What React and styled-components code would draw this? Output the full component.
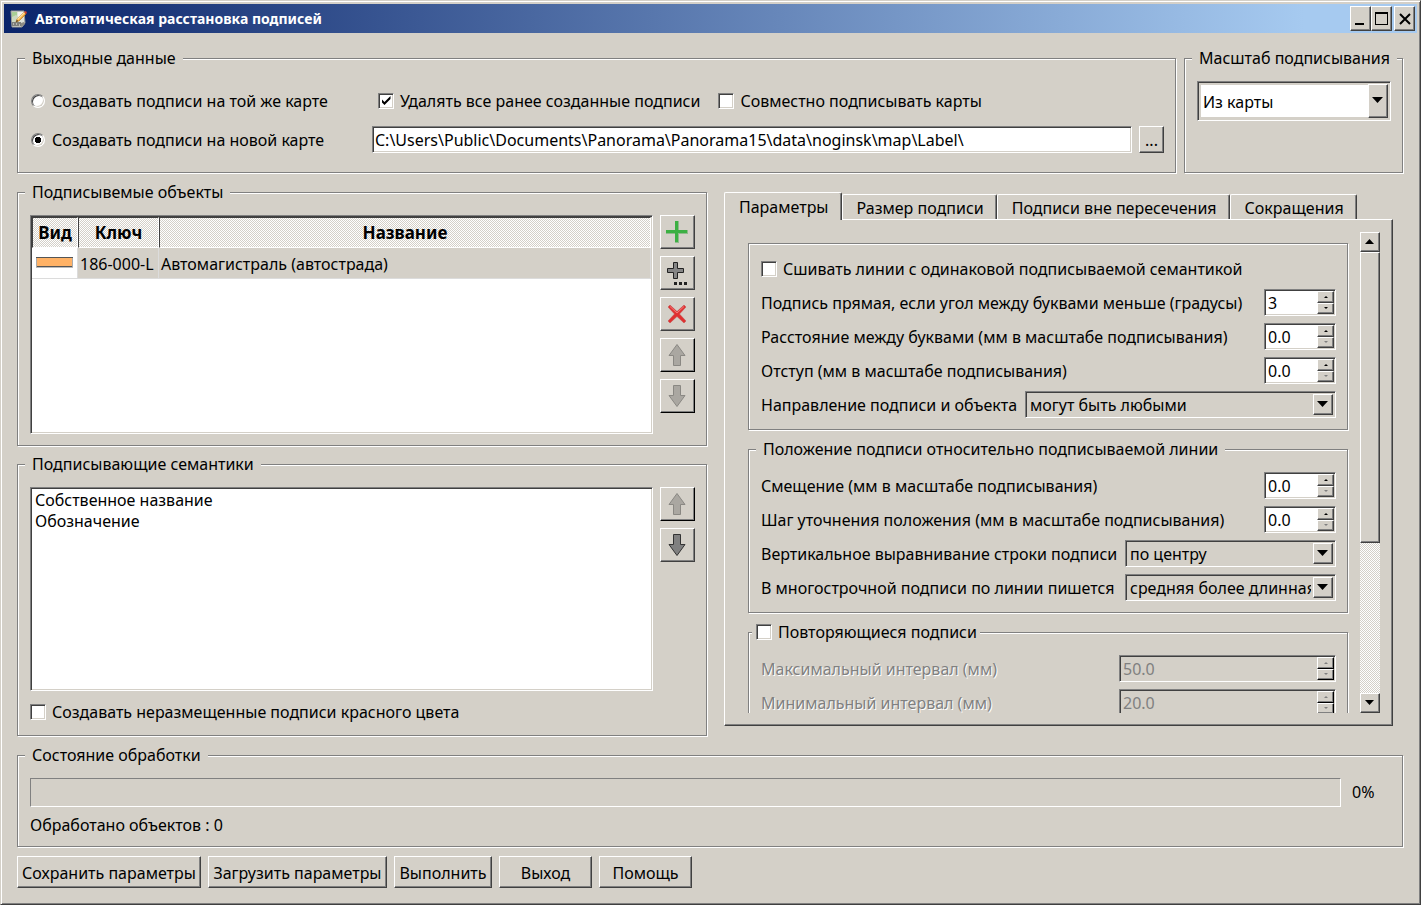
import React, { useState } from "react";
import styled, { createGlobalStyle, css } from "styled-components";

const GlobalStyle = createGlobalStyle`
  * {
    box-sizing: border-box;
  }
  body {
    margin: 0;
    background: #d4d0c8;
  }
  body,
  button,
  input,
  select {
    font-family: "Noto Sans", "Open Sans", sans-serif;
    font-size: 16px;
    line-height: 20px;
    color: #000;
  }
`;

const raised = css`
  background: #d4d0c8;
  border: 1px solid;
  border-color: #fff #404040 #404040 #fff;
  box-shadow: inset -1px -1px 0 #808080;
`;

const sunken = css`
  border: 1px solid;
  border-color: #808080 #fff #fff #808080;
  box-shadow: inset 1px 1px 0 #404040, inset -1px -1px 0 #d4d0c8;
`;

const dither = css`
  background: repeating-conic-gradient(#fff 0 25%, #d4d0c8 0 50%) 0 0 / 2px 2px;
`;

const Window = styled.div`
  min-height: 100vh;
  display: flex;
  flex-direction: column;
  padding: 2px;
  background: #d4d0c8;
  border: 1px solid;
  border-color: #d4d0c8 #404040 #404040 #d4d0c8;
  box-shadow: inset 1px 1px 0 #fff, inset -1px -1px 0 #808080;
`;

const TitleBar = styled.header`
  display: flex;
  align-items: center;
  height: 29px;
  margin: 1px 1px 0;
  padding: 0 2px 0 6px;
  background: linear-gradient(to right, #0a246a, #a6caf0 92%);
`;

const Title = styled.h1`
  flex: 1;
  margin: 0 0 0 7px;
  font-size: 14px;
  line-height: 20px;
  font-weight: bold;
  color: #fff;
`;

const CaptionButton = styled.button`
  ${raised}
  display: flex;
  align-items: center;
  justify-content: center;
  width: 21px;
  height: 25px;
  padding: 0;
  margin-left: ${(p) => (p.$apart ? "2px" : "0")};
`;

const Body = styled.main`
  flex: 1;
  display: flex;
  flex-direction: column;
  gap: 9px;
  padding: 15px 15px 14px 14px;
`;

const Row = styled.div`
  display: flex;
  gap: ${(p) => p.$gap || "7px"};
`;

const Group = styled.fieldset`
  display: flex;
  flex-direction: column;
  min-width: 0;
  margin: 0;
  padding: ${(p) => p.$pad || "13px 11px 11px 12px"};
  border: 1px solid #808080;
  box-shadow: 1px 1px 0 #fff, inset 1px 1px 0 #fff;
  flex: ${(p) => p.$flex || "none"};
`;

const Legend = styled.legend`
  display: flex;
  align-items: center;
  height: 20px;
  margin-left: ${(p) => (p.$check ? "-9px" : "-5px")};
  padding: ${(p) => (p.$check ? "0 3px 0 4px" : "0 7px")};
  background: #d4d0c8;
  white-space: nowrap;
`;

const OutputRow = styled.div`
  display: flex;
  align-items: center;
  height: 27px;
  & + & {
    margin-top: 12px;
  }
`;

const RadioLabel = styled.label`
  display: flex;
  align-items: center;
  flex: 0 0 342px;
  gap: 7px;
`;

const CheckLabel = styled.label`
  display: flex;
  align-items: center;
  gap: 6px;
  margin-left: ${(p) => p.$left || "0"};
  white-space: nowrap;
`;

const Radio = styled.input.attrs({ type: "radio" })`
  ${sunken}
  appearance: none;
  width: 14px;
  height: 14px;
  margin: 0 0 0 1px;
  border-radius: 50%;
  background: #fff;
  &:checked {
    background: radial-gradient(circle, #000 0 3px, #fff 3px);
  }
`;

const CheckBox = styled.input.attrs({ type: "checkbox" })`
  ${sunken}
  appearance: none;
  display: grid;
  place-items: center;
  width: 16px;
  height: 16px;
  margin: 0;
  background: #fff;
  &:checked::before {
    content: "";
    width: 9px;
    height: 9px;
    background: #000;
    clip-path: polygon(0 33%, 33% 66%, 100% 0, 100% 33%, 33% 100%, 0 66%);
  }
`;

const PathInput = styled.input`
  ${sunken}
  flex: 1;
  min-width: 0;
  height: 27px;
  margin-right: 7px;
  padding: 0 2px;
  background: #fff;
`;

const BrowseButton = styled.button`
  ${raised}
  width: 25px;
  height: 27px;
  padding: 0;
`;

const Columns = styled.div`
  flex: 1;
  display: flex;
  gap: 17px;
  padding-right: 10px;
`;

const LeftColumn = styled.div`
  flex: 1 1 690px;
  min-width: 0;
  display: flex;
  flex-direction: column;
  gap: 8px;
`;

const RightColumn = styled.div`
  flex: 1 1 669px;
  min-width: 0;
  display: flex;
  flex-direction: column;
  padding-top: 10px;
`;

const Fill = styled.div`
  flex: 1;
  display: flex;
  gap: 7px;
`;

const Frame = styled.div`
  ${sunken}
  flex: 1;
  min-width: 0;
  padding: ${(p) => p.$pad || "1px"};
  background: #fff;
`;

const ObjectsTable = styled.table`
  width: 100%;
  table-layout: fixed;
  border-collapse: separate;
  border-spacing: 0;
`;

const HeadCell = styled.th`
  ${dither}
  width: ${(p) => p.$w || "auto"};
  height: 31px;
  padding: 1px 0 0;
  border: 1px solid;
  border-color: #404040 #fff #fff #404040;
  font-size: 17px;
  font-weight: bold;
`;

const Cell = styled.td`
  height: 31px;
  padding: 1px 2px 0;
  border-right: 1px solid #dcdcdc;
  border-bottom: 1px solid #dcdcdc;
  background: ${(p) => (p.$plain ? "#fff" : "#d4d0c8")};
  white-space: nowrap;
`;

const ToolColumn = styled.div`
  display: flex;
  flex-direction: column;
  gap: 7px;
`;

const ToolButton = styled.button`
  ${raised}
  display: flex;
  align-items: center;
  justify-content: center;
  width: 35px;
  height: 34px;
  padding: 0 2px 0 0;
  &:disabled {
    border-color: #fff #000 #000 #fff;
  }
`;

const ItemList = styled.ul`
  margin: 0;
  padding: 0;
  list-style: none;
  line-height: 21px;
`;

const TabList = styled.div`
  display: flex;
  align-items: flex-end;
  height: 27px;
`;

const Tab = styled.button`
  height: ${(p) => (p.$active ? "28px" : "25px")};
  margin-bottom: ${(p) => (p.$active ? "-1px" : "0")};
  padding: ${(p) => (p.$active ? "0 12px 0 14px" : "2px 12px 0 14px")};
  background: #d4d0c8;
  border: 1px solid;
  border-color: #fff #404040 transparent #fff;
  border-bottom: 0;
  border-radius: 2px 2px 0 0;
  box-shadow: inset -1px 0 0 #808080;
  white-space: nowrap;
  z-index: ${(p) => (p.$active ? 1 : 0)};
`;

const TabPanel = styled.div`
  ${raised}
  flex: 1;
  display: flex;
  padding: 12px;
  margin-bottom: 10px;
`;

const ScrollView = styled.div`
  flex: 1;
  min-width: 0;
  display: flex;
  flex-direction: column;
  contain: size;
  overflow: hidden;
`;

const Settings = styled.div`
  flex: none;
  display: flex;
  flex-direction: column;
  gap: 9px;
  padding: 11px 12px 11px 11px;
`;

const ScrollBar = styled.div`
  ${dither}
  display: flex;
  flex-direction: column;
  width: 20px;
`;

const ScrollTrack = styled.div`
  flex: 1;
`;

const ScrollThumb = styled.div`
  ${raised}
  height: 66%;
`;

const ScrollButton = styled.button`
  ${raised}
  display: flex;
  align-items: center;
  justify-content: center;
  width: 20px;
  height: 20px;
  padding: 0 2px 2px 0;
`;

const Rows = styled.div`
  display: flex;
  flex-direction: column;
  gap: 7px;
`;

const SettingRow = styled.div`
  display: flex;
  align-items: center;
  justify-content: space-between;
  height: 27px;
`;

const SettingLabel = styled.label`
  white-space: nowrap;
  color: ${(p) => (p.$off ? "#808080" : "#000")};
  text-shadow: ${(p) => (p.$off ? "1px 1px 0 #fff" : "none")};
`;

const SpinFrame = styled.div`
  ${sunken}
  display: flex;
  flex: none;
  width: ${(p) => p.$w};
  height: 27px;
  padding: 1px;
  background: ${(p) => (p.$off ? "#d4d0c8" : "#fff")};
`;

const SpinInput = styled.input`
  flex: 1;
  min-width: 0;
  padding: 0 2px;
  border: 0;
  background: transparent;
  &:disabled {
    color: #808080;
  }
`;

const SpinButtons = styled.div`
  display: grid;
  grid-template-rows: 1fr 1fr;
  width: 17px;
`;

const SpinButton = styled.button`
  ${raised}
  display: flex;
  align-items: center;
  justify-content: center;
  min-height: 0;
  padding: 0;
  &:disabled {
    border-color: #fff #000 #000 #fff;
  }
`;

const SelectFrame = styled.div`
  ${sunken}
  display: flex;
  position: relative;
  flex: none;
  width: ${(p) => p.$w || "auto"};
  height: ${(p) => (p.$tall ? "40px" : "27px")};
  padding: ${(p) => (p.$tall ? "3px" : "2px")};
`;

const SelectBox = styled.select`
  appearance: none;
  flex: 1;
  min-width: 0;
  padding: ${(p) => (p.$tall ? "2px 22px 0 2px" : "0 22px 0 2px")};
  border: 0;
  border-radius: 0;
  background: ${(p) => (p.$tall ? "#fff" : "#d4d0c8")};
`;

const SelectArrow = styled.span`
  ${raised}
  position: absolute;
  top: 2px;
  right: 2px;
  bottom: 2px;
  width: 20px;
  display: flex;
  align-items: center;
  justify-content: center;
  padding: 0 2px 2px 0;
  pointer-events: none;
`;

const Progress = styled.div`
  flex: 1;
  height: 29px;
  border: 1px solid;
  border-color: #808080 #fff #fff #808080;
`;

const Percent = styled.span`
  width: 39px;
  line-height: 29px;
`;

const Status = styled.div`
  margin-top: ${(p) => p.$top || "8px"};
`;

const ActionButton = styled.button`
  ${raised}
  min-width: ${(p) => p.$w};
  height: 32px;
  padding: 2px 3px 0;
  white-space: nowrap;
`;

const Symbol = styled.svg`
  display: block;
  margin: 0 auto;
`;

const Triangle = ({ w, h, up, color = "#000" }) => (
  <svg width={w} height={h} viewBox="0 0 10 10" preserveAspectRatio="none">
    <path d={up ? "M5 0L10 10H0z" : "M0 0H10L5 10z"} fill={color} />
  </svg>
);

const AppIcon = () => (
  <svg width="18" height="18" viewBox="0 0 18 18">
    <path d="M1 1h13l1 12-3 4H2z" fill="#dfe2da" stroke="#9a9c96" />
    <path d="M2 2h5v5H2z" fill="#a9cf95" />
    <path d="M8 2h6v5H8z" fill="#f3f3ee" />
    <path d="M2 7l4-2 4 3-2 4H2z" fill="#ccd8c0" />
    <path d="M2 12h9v4H2z" fill="#7e807b" />
    <path d="M3 14h1M6 14h1M9 15h1" stroke="#eee" />
    <path d="M11 13l3-1 1 2-4 3z" fill="#8c8a84" />
    <path d="M6 12l1-3 7-7 2 2-7 7z" fill="#f6ac3a" stroke="#a86d1c" strokeWidth="0.6" />
    <path d="M7 9l7-7 1 1-7 7z" fill="#fde0a0" />
    <path d="M14 2l2-1 1 2-1 1z" fill="#d8402f" />
    <path d="M6 12l1-2 1 1z" fill="#222" />
  </svg>
);

const PlusIcon = () => (
  <svg width="22" height="22" viewBox="0 0 22 22">
    <path d="M9 0h4v9h9v4h-9v9H9v-9H0V9h9z" fill="#8fba8b" />
    <path d="M9 0h3v9h9v3h-9v9H9v-9H0V9h9z" fill="#3cb043" />
  </svg>
);

const PlusDotsIcon = () => (
  <svg width="22" height="24" viewBox="0 0 22 24">
    <path
      d="M7.5 1.5h4v6h6v4h-6v6h-4v-6h-6v-4h6z"
      fill="#858585"
      stroke="#222"
    />
    <path d="M8 21h3v3H8zM13 21h3v3h-3zM18 21h3v3h-3z" fill="#222" />
  </svg>
);

const CrossIcon = () => (
  <svg width="20" height="20" viewBox="0 0 20 20">
    <path
      d="M3 1l7 6.500L17 1l2 2-6.500 7L19 17l-2 2-7-6.500L3 19l-2-2 6.500-7L1 3z"
      fill="#e03030"
      stroke="#c05050"
      strokeWidth="0.5"
    />
    <path d="M3 2.500l7 6.500 7-6.500" fill="none" stroke="#f47a78" />
  </svg>
);

const ArrowIcon = ({ down, off }) => (
  <svg width="20" height="24" viewBox="0 0 20 24">
    <path
      d={
        down
          ? "M6.5 1.5h7v10h4.5L10 22.5 2 11.5h4.5z"
          : "M10 1.5l8 11h-4.5v10h-7v-10H2z"
      }
      fill={off ? "#aaa7a1" : "#808080"}
      stroke={off ? "#8a8883" : "#333"}
    />
  </svg>
);

const LineSymbol = () => (
  <Symbol width="37" height="13" viewBox="0 0 37 13">
    <rect x="0" y="0" width="37" height="11" fill="#ffb266" />
    <path d="M0 0.5H37M0 9.5H37" stroke="#555" />
    <path d="M0 10.5H37" stroke="#bbb" />
    <path d="M0.5 1V10M36.5 1V10" stroke="#aaa" />
  </Symbol>
);

const Check = ({ label, left, ...rest }) => (
  <CheckLabel $left={left}>
    <CheckBox {...rest} />
    {label}
  </CheckLabel>
);

const Combo = ({ id, label, value, width, tall }) => (
  <SelectFrame $w={width} $tall={tall}>
    <SelectBox id={id} aria-label={label} defaultValue={value} $tall={tall}>
      <option value={value}>{value}</option>
    </SelectBox>
    <SelectArrow>
      <Triangle w={11} h={6} />
    </SelectArrow>
  </SelectFrame>
);

const Spin = ({ id, label, value, width = "72px", atMin = true, disabled }) => (
  <SettingRow>
    <SettingLabel htmlFor={id} $off={disabled}>
      {label}
    </SettingLabel>
    <SpinFrame $w={width} $off={disabled}>
      <SpinInput id={id} defaultValue={value} disabled={disabled} />
      <SpinButtons>
        <SpinButton aria-label="Больше" disabled={disabled}>
          <Triangle up w={4} h={2} color={disabled ? "#808080" : "#000"} />
        </SpinButton>
        <SpinButton aria-label="Меньше" disabled={disabled}>
          <Triangle w={4} h={2} color={atMin ? "#808080" : "#000"} />
        </SpinButton>
      </SpinButtons>
    </SpinFrame>
  </SettingRow>
);

const Choice = ({ id, label, value, width }) => (
  <SettingRow>
    <SettingLabel htmlFor={id}>{label}</SettingLabel>
    <Combo id={id} value={value} width={width} />
  </SettingRow>
);

const tabs = ["Параметры", "Размер подписи", "Подписи вне пересечения", "Сокращения"];

const actions = [
  { text: "Сохранить параметры", width: "184px" },
  { text: "Загрузить параметры", width: "179px" },
  { text: "Выполнить", width: "98px" },
  { text: "Выход", width: "93px" },
  { text: "Помощь", width: "93px" },
];

const App = () => {
  const [target, setTarget] = useState("new");
  const [tab, setTab] = useState(0);

  return (
    <>
      <GlobalStyle />
      <Window>
        <TitleBar>
          <AppIcon />
          <Title>Автоматическая расстановка подписей</Title>
          <CaptionButton aria-label="Свернуть">
            <svg width="13" height="15" viewBox="0 0 13 15">
              <path d="M1 12h9v2H1z" />
            </svg>
          </CaptionButton>
          <CaptionButton aria-label="Развернуть">
            <svg width="13" height="13" viewBox="0 0 13 13">
              <path d="M0 0h13v13H0zM1 2v10h11V2z" fillRule="evenodd" />
            </svg>
          </CaptionButton>
          <CaptionButton aria-label="Закрыть" $apart>
            <svg width="12" height="12" viewBox="0 0 12 12">
              <path d="M1 1l10 10M11 1L1 11" stroke="#000" strokeWidth="2" />
            </svg>
          </CaptionButton>
        </TitleBar>

        <Body>
          <Row $gap="8px">
            <Group $flex="1" $pad="19px 11px 19px 12px">
              <Legend>Выходные данные</Legend>
              <OutputRow>
                <RadioLabel>
                  <Radio name="target" checked={target === "same"} onChange={() => setTarget("same")} />
                  Создавать подписи на той же карте
                </RadioLabel>
                <Check label="Удалять все ранее созданные подписи" left="6px" defaultChecked />
                <Check label="Совместно подписывать карты" left="18px" />
              </OutputRow>
              <OutputRow>
                <RadioLabel>
                  <Radio name="target" checked={target === "new"} onChange={() => setTarget("new")} />
                  Создавать подписи на новой карте
                </RadioLabel>
                <PathInput
                  aria-label="Путь к новой карте"
                  defaultValue="C:\Users\Public\Documents\Panorama\Panorama15\data\noginsk\map\Label\"
                />
                <BrowseButton>...</BrowseButton>
              </OutputRow>
            </Group>
            <Group $flex="0 0 219px">
              <Legend>Масштаб подписывания</Legend>
              <Combo label="Масштаб подписывания" value="Из карты" tall />
            </Group>
          </Row>

          <Columns>
            <LeftColumn>
              <Group $flex="1 1 264px">
                <Legend>Подписывемые объекты</Legend>
                <Fill>
                  <Frame>
                    <ObjectsTable>
                      <thead>
                        <tr>
                          <HeadCell $w="46px">Вид</HeadCell>
                          <HeadCell $w="81px">Ключ</HeadCell>
                          <HeadCell>Название</HeadCell>
                        </tr>
                      </thead>
                      <tbody>
                        <tr>
                          <Cell $plain>
                            <LineSymbol />
                          </Cell>
                          <Cell>186-000-L</Cell>
                          <Cell>Автомагистраль (автострада)</Cell>
                        </tr>
                      </tbody>
                    </ObjectsTable>
                  </Frame>
                  <ToolColumn>
                    <ToolButton aria-label="Добавить">
                      <PlusIcon />
                    </ToolButton>
                    <ToolButton aria-label="Добавить несколько">
                      <PlusDotsIcon />
                    </ToolButton>
                    <ToolButton aria-label="Удалить">
                      <CrossIcon />
                    </ToolButton>
                    <ToolButton aria-label="Вверх" disabled>
                      <ArrowIcon off />
                    </ToolButton>
                    <ToolButton aria-label="Вниз" disabled>
                      <ArrowIcon down off />
                    </ToolButton>
                  </ToolColumn>
                </Fill>
              </Group>

              <Group $flex="1 1 282px" $pad="13px 11px 13px 12px">
                <Legend>Подписывающие семантики</Legend>
                <Fill>
                  <Frame $pad="2px 4px">
                    <ItemList>
                      <li>Собственное название</li>
                      <li>Обозначение</li>
                    </ItemList>
                  </Frame>
                  <ToolColumn>
                    <ToolButton aria-label="Вверх" disabled>
                      <ArrowIcon off />
                    </ToolButton>
                    <ToolButton aria-label="Вниз">
                      <ArrowIcon down />
                    </ToolButton>
                  </ToolColumn>
                </Fill>
                <Status $top="11px">
                  <Check label="Создавать неразмещенные подписи красного цвета" />
                </Status>
              </Group>
            </LeftColumn>

            <RightColumn>
              <TabList role="tablist">
                {tabs.map((name, i) => (
                  <Tab key={name} role="tab" aria-selected={tab === i} $active={tab === i} onClick={() => setTab(i)}>
                    {name}
                  </Tab>
                ))}
              </TabList>
              <TabPanel role="tabpanel">
                <ScrollView>
                  <Settings>
                    <Group $pad="11px 11px 11px 12px">
                      <Rows>
                        <SettingRow>
                          <Check label="Сшивать линии с одинаковой подписываемой семантикой" />
                        </SettingRow>
                        <Spin
                          id="angle"
                          label="Подпись прямая, если угол между буквами меньше (градусы)"
                          value="3"
                          atMin={false}
                        />
                        <Spin id="spacing" label="Расстояние между буквами (мм в масштабе подписывания)" value="0.0" />
                        <Spin id="indent" label="Отступ (мм в масштабе подписывания)" value="0.0" />
                        <Choice
                          id="direction"
                          label="Направление подписи и объекта"
                          value="могут быть любыми"
                          width="311px"
                        />
                      </Rows>
                    </Group>

                    <Group>
                      <Legend>Положение подписи относительно подписываемой линии</Legend>
                      <Rows>
                        <Spin id="offset" label="Смещение (мм в масштабе подписывания)" value="0.0" />
                        <Spin id="step" label="Шаг уточнения положения (мм в масштабе подписывания)" value="0.0" />
                        <Choice
                          id="valign"
                          label="Вертикальное выравнивание строки подписи"
                          value="по центру"
                          width="211px"
                        />
                        <Choice
                          id="multiline"
                          label="В многострочной подписи по линии пишется"
                          value="средняя более длинная"
                          width="211px"
                        />
                      </Rows>
                    </Group>

                    <Group>
                      <Legend $check>
                        <Check label="Повторяющиеся подписи" />
                      </Legend>
                      <Rows>
                        <Spin id="max" label="Максимальный интервал (мм)" value="50.0" width="217px" disabled />
                        <Spin id="min" label="Минимальный интервал (мм)" value="20.0" width="217px" disabled />
                      </Rows>
                    </Group>
                  </Settings>
                </ScrollView>
                <ScrollBar>
                  <ScrollButton aria-label="Прокрутить вверх">
                    <Triangle up w={9} h={5} />
                  </ScrollButton>
                  <ScrollTrack>
                    <ScrollThumb />
                  </ScrollTrack>
                  <ScrollButton aria-label="Прокрутить вниз">
                    <Triangle w={9} h={5} />
                  </ScrollButton>
                </ScrollBar>
              </TabPanel>
            </RightColumn>
          </Columns>

          <Group>
            <Legend>Состояние обработки</Legend>
            <Row $gap="11px">
              <Progress role="progressbar" aria-label="Состояние обработки" aria-valuenow={0} />
              <Percent>0%</Percent>
            </Row>
            <Status>Обработано объектов : 0</Status>
          </Group>

          <Row>
            {actions.map((a) => (
              <ActionButton key={a.text} $w={a.width}>
                {a.text}
              </ActionButton>
            ))}
          </Row>
        </Body>
      </Window>
    </>
  );
};

export default App;
